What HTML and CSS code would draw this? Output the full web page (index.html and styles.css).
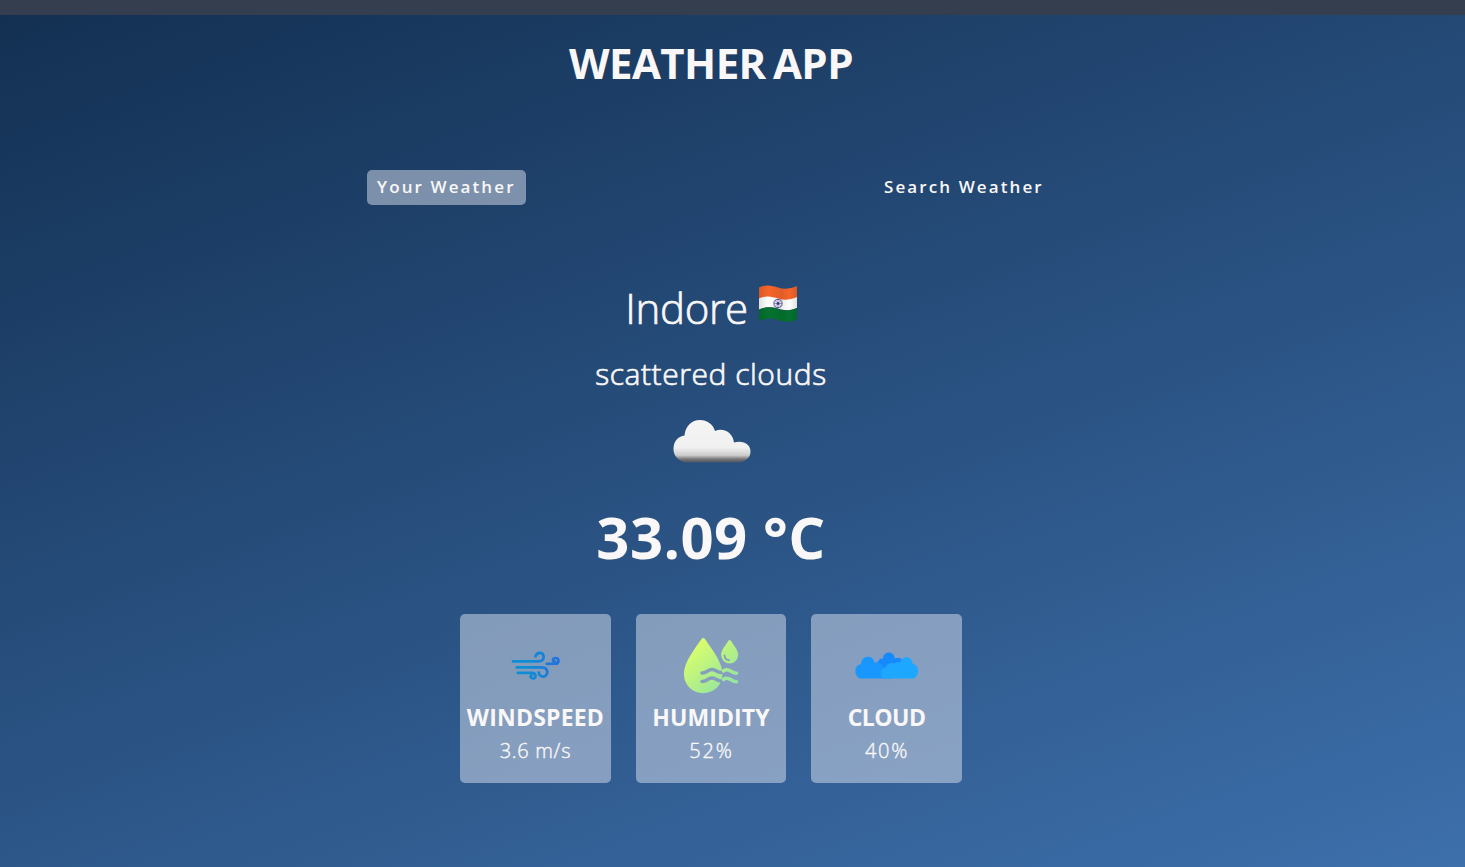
FILE: index.html
```html
<!DOCTYPE html>
<html lang="en">
<head>
<meta charset="utf-8">
<title>Weather App</title>
<link rel="stylesheet" href="styles.css">
</head>
<body>
<div class="topbar"></div>
<main class="wrapper">
  <h1 class="title">WEATHER APP</h1>
  <nav class="tabs">
    <p class="tab tab-active">Your Weather</p>
    <p class="tab tab-search">Search Weather</p>
  </nav>
  <section class="info">
    <div class="place">
      <p class="city">Indore</p>
      <svg class="flag" viewBox="0 0 38 38">
        <defs>
          <clipPath id="wave"><path d="M0 2.5C7-1 13 .5 19 2.5S31 4 38 1V34.500C31 38 25 37 19 35S7 33 0 36Z"/></clipPath>
          <linearGradient id="shade"><stop offset="0" stop-opacity=".12"/><stop offset=".25" stop-opacity="0"/><stop offset=".6" stop-opacity=".08"/><stop offset=".8" stop-opacity="0"/><stop offset="1" stop-opacity=".12"/></linearGradient>
        </defs>
        <g clip-path="url(#wave)">
          <path fill="#f5652a" d="M0-2H38V15H0Z"/>
          <path fill="#fff" d="M0 13.500C7 10 13 11.500 19 13.500S31 15 38 12V23C31 26 25 25.500 19 23.500S7 21.500 0 25Z"/>
          <path fill="#04732f" d="M0 24.500C7 21 13 22 19 24S31 26 38 23V39H0Z"/>
          <circle cx="19" cy="18.500" r="4.100" fill="#f4f4fc" stroke="#34347e" stroke-width=".8"/>
          <path stroke="#34347e" stroke-width=".45" d="M15 18.500H23M19 14.500V22.500M16.200 15.700L21.800 21.300M21.800 15.700L16.200 21.300"/>
          <circle cx="19" cy="18.500" r="1.300" fill="#34347e"/>
          <path fill="url(#shade)" d="M0 0H38V38H0Z"/>
        </g>
      </svg>
    </div>
    <p class="description">scattered clouds</p>
    <svg class="weather-icon" viewBox="0 0 80 46">
      <defs>
        <linearGradient id="cloudFill" x1="0" y1="0" x2="0" y2="1"><stop offset="0" stop-color="#f5f5f5"/><stop offset=".65" stop-color="#f0f0f0"/><stop offset=".83" stop-color="#ccc"/><stop offset=".92" stop-color="#777"/><stop offset="1" stop-color="#4d5562"/></linearGradient>
        <filter id="soft"><feGaussianBlur stdDeviation=".7"/></filter>
      </defs>
      <path filter="url(#soft)" fill="url(#cloudFill)" d="M14 44.500C6 42 2.500 37 2.500 31C2.500 23 7 18.500 13.500 17.500C14.500 8 20.500 2 29 2C36 2 42 6 44 13C53 9 62 15 63 24.500C72 22 79.500 26 79.500 33.500C79.500 39 76 42 70 44.500Z"/>
    </svg>
    <p class="temp">33.09 °C</p>
    <div class="cards">
      <article class="card">
        <svg class="icon" viewBox="0 0 80 80">
          <defs><linearGradient id="wind" gradientUnits="userSpaceOnUse" x1="17" y1="40" x2="64" y2="40"><stop offset="0" stop-color="#0a90d2"/><stop offset=".4" stop-color="#118bd5"/><stop offset="1" stop-color="#2271dc"/></linearGradient></defs>
          <g fill="none" stroke="url(#wind)" stroke-width="2.700" stroke-linecap="round">
            <path d="M18 36.400L43.500 36.300C47.500 36.300 48.800 34 48.600 31.500C48.300 26.700 41.500 26.700 40.500 31.500"/>
            <path d="M21.700 42.400L46.500 42.300C50.600 42.300 52.300 44 52.300 47C52.300 53 43.800 53 43.800 47.500"/>
            <path d="M22.700 47.900L36.500 47.800C41.800 47.800 41.500 53.500 38 53.500C35 53.500 35 50.600 36.500 50.500"/>
            <path d="M51.700 38.800L60.300 38.700C64.500 38.700 64.500 33 60.700 33C57.200 33 57 37 60 36.500"/>
          </g>
        </svg>
        <h2 class="card-title wind-title">WINDSPEED</h2>
        <p class="card-value wind-value">3.6 m/s</p>
      </article>
      <article class="card">
        <svg class="icon" viewBox="0 0 80 80">
          <defs><linearGradient id="drop" gradientUnits="userSpaceOnUse" x1="22" y1="18" x2="60" y2="60"><stop offset="0" stop-color="#ddff68"/><stop offset="1" stop-color="#94e4a0"/></linearGradient>
          <mask id="cut" maskUnits="userSpaceOnUse" x="0" y="0" width="80" height="80"><path fill="#fff" d="M0 0H80V80H0Z"/><g fill="none" stroke="#000" stroke-width="3.500" stroke-linecap="round"><path d="M31 48C36 48 36.500 44.500 41 44.500S46 48.300 51.500 47.500"/><path d="M31 56.500C36 56.500 36.500 53 41 53S46 56.800 51.500 56"/></g></mask></defs>
          <path mask="url(#cut)" fill="url(#drop)" d="M31.400 13.300C32.500 12.700 33.500 13.300 34.500 14.800C42.500 26.500 51.500 38 51.500 49A19.300 19.300 0 0 1 12.900 49C12.900 38 22.500 25.500 30 14.800Q30.700 13.700 31.400 13.300Z"/>
          <path fill="url(#drop)" d="M57.500 15.600Q58.500 14.500 59.700 15.600C62.500 20 67.200 25 67.200 30A8.500 8.500 0 0 1 50.100 30C50.100 25 55 20 57.500 15.600Z"/>
          <path fill="none" stroke="#849bbb" stroke-width="1.800" stroke-linecap="round" d="M53.500 30.500Q54 35 58 35.200"/>
          <g fill="none" stroke="url(#drop)" stroke-width="3.500" stroke-linecap="round"><path d="M52.500 46C58 42 60 48.500 65.600 48.200M52.500 54.500C58 50.500 60 57 65.600 56.700"/></g>
        </svg>
        <h2 class="card-title humidity-title">HUMIDITY</h2>
        <p class="card-value humidity-value">52%</p>
      </article>
      <article class="card">
        <svg class="icon" viewBox="0 0 80 80">
          <path fill="#158aff" d="M31 52L30 38Q32 33 36 33.500C36 25.500 47.500 25.500 47.700 33.500Q55 31 56 38V52Z"/>
          <path fill="#1a97ff" d="M12.500 53.500C6.500 50 7 40 14 39C14.500 29.500 26.500 29.500 27.500 37.500Q34 36 36 42L46 53.500Z"/>
          <path fill="#1ea7ff" d="M36 53.500C32 49 34 43 38.500 42.500Q41 36.500 47.500 38.500Q49.500 36 53 37.500C55.500 29.500 65.500 31 65.500 38.500C72.500 40 73 50 67 53.500Z"/>
        </svg>
        <h2 class="card-title cloud-title">CLOUD</h2>
        <p class="card-value cloud-value">40%</p>
      </article>
    </div>
  </section>
</main>
</body>
</html>
```
FILE: styles.css
```css
* { box-sizing: border-box; margin: 0; padding: 0; }
body {
  height: 867px;
  overflow: hidden;
  font-family: "Open Sans", "Noto Sans", sans-serif;
  color: #f9f7f7;
  background: linear-gradient(160deg, #112d4e 0%, #3f72af 100%) 0 -54px / 1465px 980px no-repeat;
}
.topbar { height: 15px; background: #353e4f; }
.wrapper { width: 1422px; display: flex; flex-direction: column; align-items: center; padding-top: 18px; white-space: nowrap; }
.title { font-size: 42px; line-height: 60px; font-weight: 700; letter-spacing: -0.6px; word-spacing: -3px; }
.tabs { width: 688px; margin-top: 77px; display: flex; justify-content: space-between; }
.tab { height: 35px; padding: 0 10px; border-radius: 5px; font-size: 17px; line-height: 33px; font-weight: 600; letter-spacing: 2.1px; }
.tab-active { width: 159px; background: rgba(219, 226, 239, .5); }
.tab-search { width: 180px; padding-left: 9px; }
.info { display: flex; flex-direction: column; align-items: center; }
.place { margin-top: 75px; height: 58px; display: flex; gap: 11px; }
.city { font-size: 42px; line-height: 56px; font-weight: 300; letter-spacing: -0.3px; }
.flag { width: 38px; height: 38px; margin-top: 5px; }
.description { margin-top: 15px; font-size: 30px; line-height: 42px; font-weight: 300; letter-spacing: 0.55px; }
.city, .description { -webkit-text-stroke: 0.7px currentColor; }
.weather-icon { width: 80px; height: 46px; margin-top: 23px; }
.temp { margin-top: 35px; font-size: 58px; line-height: 76px; font-weight: 700; letter-spacing: 0.4px; }
.cards { display: flex; gap: 25px; margin-top: 39px; }
.card { width: 150.600px; height: 169px; border-radius: 5px; background: rgba(219, 226, 239, .5); display: flex; flex-direction: column; align-items: center; padding-top: 11px; }
.icon { width: 80px; height: 80px; }
.card-title { margin-top: -2px; font-size: 23px; line-height: 28px; font-weight: 700; }
.wind-title { letter-spacing: 0.2px; }
.humidity-title { letter-spacing: 0.1px; }
.cloud-title { letter-spacing: -0.5px; }
.card-value { margin-top: 6px; font-size: 20px; line-height: 28px; font-weight: 300; letter-spacing: 0.7px; -webkit-text-stroke: 0.4px currentColor; }
.humidity-value, .cloud-value { letter-spacing: 1.8px; padding-left: 1px; }
```
